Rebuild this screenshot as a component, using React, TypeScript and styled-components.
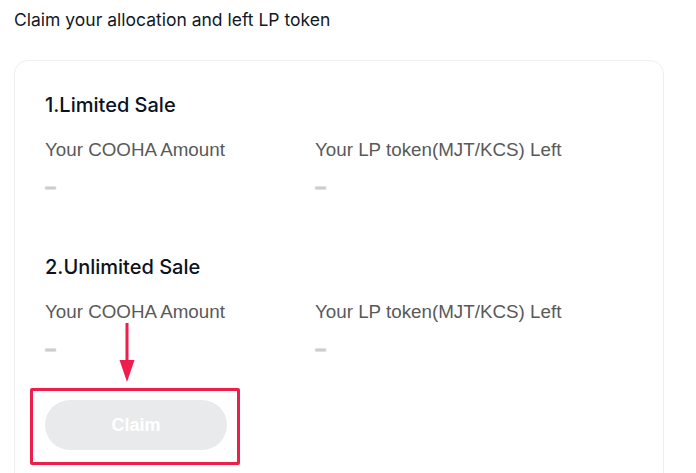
import React from "react";
import styled, { createGlobalStyle } from "styled-components";

const Global = createGlobalStyle`
  html, body { margin: 0; padding: 0; background: #ffffff; }
  body { font-family: "Liberation Sans", Arial, sans-serif; }
`;

const Page = styled.div`
  padding: 8px 0 0 14px;
  width: 650px;
  height: 465px;
  overflow: hidden;
`;

const Title = styled.h1`
  margin: 0;
  font-family: Inter, "Noto Sans", sans-serif;
  font-size: 17.5px;
  line-height: 24px;
  font-weight: 400;
  color: #111827;
`;

const Card = styled.div`
  margin-top: 28px;
  border: 1px solid #efefef;
  border-radius: 14px;
  padding: 32px 30px 60px;
  display: flex;
  flex-direction: column;
  gap: 57px;
`;

const Section = styled.section`
  display: flex;
  flex-direction: column;
`;

const Heading = styled.h2`
  margin: 0;
  font-family: Inter, "Noto Sans", sans-serif;
  font-size: 20px;
  line-height: 24px;
  font-weight: 500;
  color: #0b1220;
`;

const Grid = styled.div`
  margin-top: 22px;
  display: grid;
  grid-template-columns: 270px auto;
`;

const Field = styled.div`
  display: flex;
  flex-direction: column;
`;

const Label = styled.div`
  font-size: 18.8px;
  line-height: 22px;
  color: #595959;
`;

const Value = styled.div`
  margin-top: 13px;
  font-size: 20px;
  line-height: 24px;
  font-weight: 700;
  color: #cdcdcd;
  -webkit-text-stroke: 0.8px #cdcdcd;
`;

const ButtonArea = styled.div`
  position: relative;
  margin-top: -17px;
  width: 182px;
`;

const ClaimButton = styled.button`
  width: 182px;
  height: 50px;
  border: none;
  border-radius: 25px;
  background: #e9eaeb;
  color: #ffffff;
  font-family: "Liberation Sans", Arial, sans-serif;
  font-size: 18px;
  font-weight: 700;
  cursor: not-allowed;
`;

const Highlight = styled.div`
  position: absolute;
  left: -15px;
  top: -12px;
  width: 210px;
  height: 77px;
  box-sizing: border-box;
  border: 3px solid #ef1d4b;
  border-radius: 2px;
  pointer-events: none;
`;

const Arrow = styled.svg`
  position: absolute;
  left: 74px;
  top: -77px;
`;

const fields = [
  { label: "Your COOHA Amount" },
  { label: "Your LP token(MJT/KCS) Left" },
];

const SaleBlock: React.FC<{ title: string }> = ({ title }) => (
  <Section>
    <Heading>{title}</Heading>
    <Grid>
      {fields.map((f) => (
        <Field key={f.label}>
          <Label>{f.label}</Label>
          <Value>–</Value>
        </Field>
      ))}
    </Grid>
  </Section>
);

export default function App() {
  return (
    <>
      <Global />
      <Page>
        <Title>Claim your allocation and left LP token</Title>
        <Card>
          <SaleBlock title="1.Limited Sale" />
          <SaleBlock title="2.Unlimited Sale" />
          <ButtonArea>
            <Arrow width="16" height="60" viewBox="0 0 16 60">
              <rect x="6.5" y="0" width="3" height="40" fill="#ef1d4b" />
              <polygon points="0.5,37 15.5,37 8,59" fill="#ef1d4b" />
            </Arrow>
            <ClaimButton disabled>Claim</ClaimButton>
            <Highlight />
          </ButtonArea>
        </Card>
      </Page>
    </>
  );
}
